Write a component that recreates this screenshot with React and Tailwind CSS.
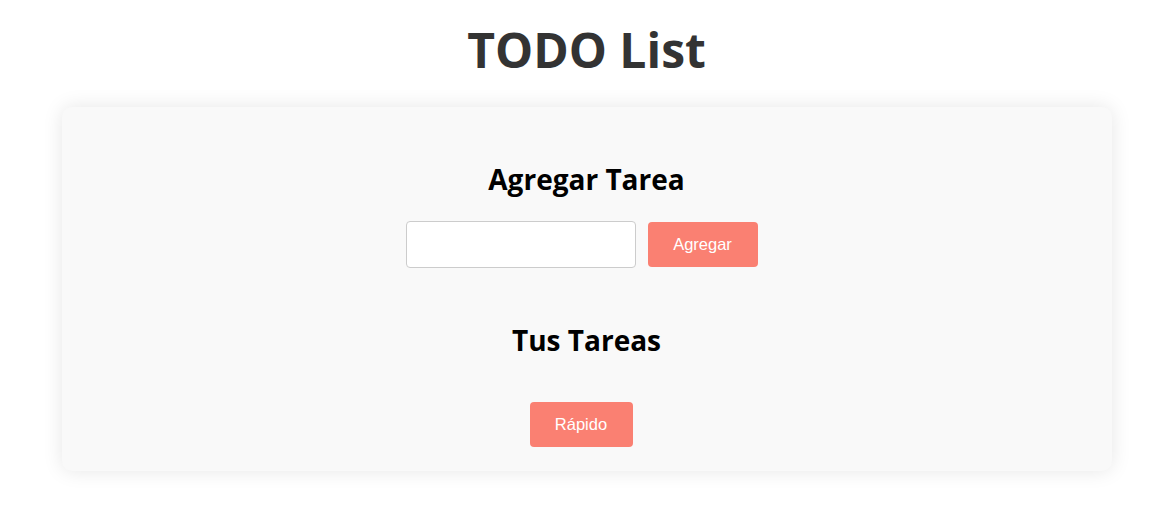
export default function App() {
  return (
    <div className="min-h-[531px] bg-white pt-[18px] font-['Open_Sans',sans-serif]">
      <h1 className="text-center text-[48px] leading-[64px] font-bold text-[#333]">TODO List</h1>
      <div className="mx-auto mt-[25px] w-[1050px] rounded-[10px] bg-[#f9f9f9] pt-[52px] pb-[24px] shadow-[0_0_20px_rgba(0,0,0,0.1)]">
        <h2 className="text-center text-[28px] leading-[40px] font-bold text-black">Agregar Tarea</h2>
        <div className="mt-[22px] flex items-center justify-center gap-3 pr-[10px]">
          <input
            type="text"
            className="h-[47px] w-[230px] rounded-[4px] border border-[#ccc] bg-white px-2 outline-none"
          />
          <button className="h-[45px] w-[110px] rounded-[4px] bg-[#fa8072] font-['Liberation_Sans',sans-serif] text-[16.5px] text-white">
            Agregar
          </button>
        </div>
        <h2 className="mt-[52px] text-center text-[28px] leading-[40px] font-bold text-black">Tus Tareas</h2>
        <div className="mt-[42px] flex justify-center">
          <button className="ml-[-11px] h-[45px] w-[103px] rounded-[4px] bg-[#fa8072] font-['Liberation_Sans',sans-serif] text-[16.5px] text-white">
            Rápido
          </button>
        </div>
      </div>
    </div>
  );
}
